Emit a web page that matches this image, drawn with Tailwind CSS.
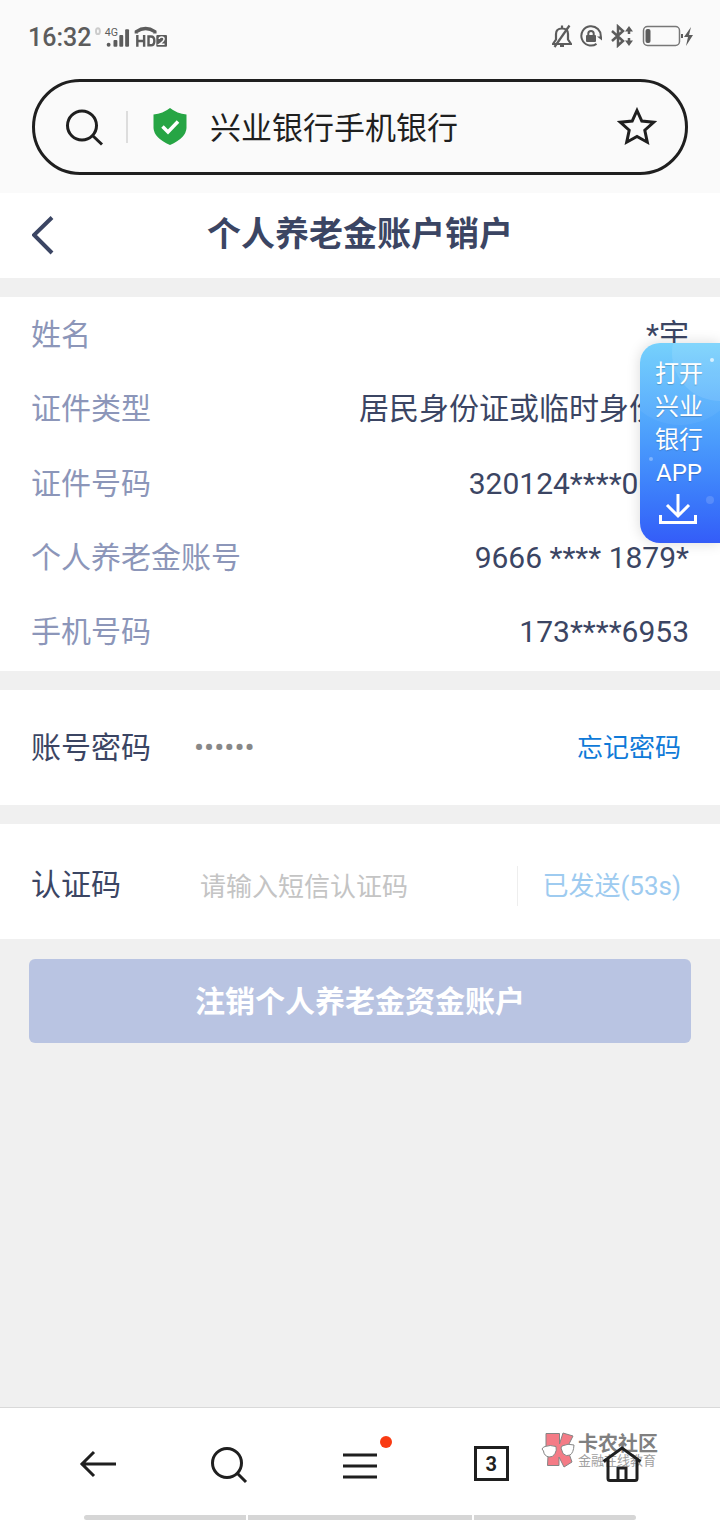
<!DOCTYPE html>
<html lang="zh-CN">
<head>
<meta charset="utf-8">
<meta name="viewport" content="width=device-width, initial-scale=1">
<title>个人养老金账户销户</title>
<script src="https://cdn.jsdelivr.net/npm/@tailwindcss/browser@4"></script>
</head>
<body class="bg-[#f0f0f0] font-['Roboto','Noto_Sans_CJK_SC',sans-serif] text-[#3b4563]">
<div class="relative flex min-h-screen flex-col">

  <header class="bg-[#fafafa] px-8 pb-[18px]">
    <!-- Status bar -->
    <div class="-mx-1 flex h-[79px] items-center justify-between pb-1 text-[#5c5c5c]">
      <div class="flex items-center">
        <span class="text-[25px] font-medium">16:32</span>
        <svg class="ml-1 h-6 w-[72px]" viewBox="0 0 74 24" fill="none">
          <ellipse cx="3" cy="5" rx="2" ry="3" stroke="#cccccc" stroke-width="2"/>
          <text x="10" y="10" font-size="11" fill="#5c5c5c">4G</text>
          <g fill="#5c5c5c"><circle cx="14" cy="19" r="2"/><rect x="19" y="14" width="4" height="7" rx="1"/><rect x="25" y="9" width="4" height="12" rx="1"/><rect x="31" y="3" width="4" height="18" rx="1"/></g>
          <path d="M42.500 7.500v-2q9.500-6.500 19 0v2" stroke="#5c5c5c" stroke-width="3.500"/>
          <path d="M43.500 9v12M50.500 9v12M43.500 15h7M55 10.500v9h2.500q3.500 0 3.500-4.500t-3.500-4.500z" stroke="#5c5c5c" stroke-width="2.500"/>
          <rect x="63" y="9" width="11" height="12" rx="1" fill="#5c5c5c"/>
          <path d="M66 13q0-2 2.500-2t2.500 2q0 2-5 5.500h5.500" stroke="#fafafa" stroke-width="1.500"/>
        </svg>
      </div>
      <div class="flex items-center pb-1">
        <svg class="mr-2 h-6 w-5" viewBox="0 0 20 24" fill="none" stroke="#5c5c5c" stroke-width="2.200"><path d="M1 20h18l-3-4.500V10q0-5.500-6-5.500T4 10v5.500zM10 4V1.500M8 22h4"/><path d="M17.500 1.500 2.500 23"/></svg>
        <svg class="mr-2 h-6 w-[22px]" viewBox="0 0 22 24" fill="none" stroke="#5c5c5c" stroke-width="2"><path d="M16.500 19.900A9.700 9.700 0 1 1 20.700 13"/><path d="M17 12.500h5v4z" fill="#5c5c5c" stroke="none"/><path d="M8.300 11V9.500q0-2.500 2.700-2.500t2.700 2.500V11"/><rect x="6" y="11" width="10" height="7" rx="1" fill="#5c5c5c" stroke="none"/></svg>
        <svg class="mr-2 h-6 w-6" viewBox="0 0 24 24" fill="none" stroke="#5c5c5c" stroke-width="2.500"><path d="M2 7l11 10-5 4.500v-19L13 7 2 17"/><path d="M19 5v5M19 14v5" stroke-width="2.500"/><path d="M15 7.500 19 2l4 5.500zM15 16.500l4 5.500 4-5.500z" fill="#5c5c5c" stroke="none"/></svg>
        <svg class="-mr-0.5 h-6 w-[52px]" viewBox="0 0 52 24"><rect x="1.500" y="2.500" width="36" height="19" rx="4" fill="none" stroke="#777777" stroke-width="1.500"/><rect x="3.500" y="5" width="5" height="14" rx="2" fill="#5c5c5c"/><rect x="39" y="10" width="2" height="4" fill="#5c5c5c"/><path d="M49 3l-7 10h4l-2 9 7-11h-4z" fill="#5c5c5c"/></svg>
      </div>
    </div>

    <!-- Address bar -->
    <div class="flex h-24 items-center rounded-full border-3 border-[#1f1f1f] px-[30px]">
      <button type="button" aria-label="搜索" class="shrink-0">
        <svg class="size-10" viewBox="0 0 40 40" fill="none" stroke="#1f1f1f" stroke-width="3"><circle cx="17" cy="18.500" r="14.500"/><path d="M27.500 28.500 37 37.500"/></svg>
      </button>
      <span class="mr-5 ml-[21px] h-8 w-0.5 bg-[#dddddd]"></span>
      <svg class="mx-1 h-10 w-[36px] shrink-0" viewBox="0 0 36 40"><path d="M18 1Q25 6.500 34.500 7.500V21Q34 31 18 38Q2 31 1.500 21V7.500Q11 6.500 18 1z" fill="#26a544"/><path d="M10.500 19.500l5.500 5.500 10-10.500" fill="none" stroke="#fff" stroke-width="3.500"/></svg>
      <label for="address" class="sr-only">地址栏</label>
      <input id="address" type="text" value="兴业银行手机银行" class="ml-[18px] min-w-0 flex-1 bg-transparent pt-1 text-[31px] text-[#1f1f1f] outline-none">
      <button type="button" aria-label="收藏" class="-mr-0.5 shrink-0">
        <svg class="size-10" viewBox="0 0 40 40" fill="none" stroke="#1f1f1f" stroke-width="3"><path d="M20 3.500l4.800 10.500 12 1.200-9 8 2.500 12L20 29.500l-10.300 5.700 2.500-12-9-8 12-1.200z"/></svg>
      </button>
    </div>
  </header>

  <main class="flex-1">
    <div class="flex h-[85px] items-center bg-white px-8">
      <button type="button" aria-label="返回" class="w-10"><svg class="h-10 w-6" viewBox="0 0 24 40" fill="none" stroke="#3b4563" stroke-width="4"><path d="M20 1.500 2 19l18 18"/></svg></button>
      <h1 class="flex-1 pb-0.5 text-center text-[34px] font-bold">个人养老金账户销户</h1>
      <span class="w-10"></span>
    </div>

    <dl class="mt-[19px] bg-white px-[31px] pb-[3px] text-[30px]">
      <div class="flex h-[74px] items-center justify-between"><dt class="text-[#8c96b9]">姓名</dt><dd>*宇</dd></div>
      <div class="flex h-[75px] items-center justify-between"><dt class="text-[#8c96b9]">证件类型</dt><dd>居民身份证或临时身份证</dd></div>
      <div class="flex h-[74px] items-center justify-between"><dt class="text-[#8c96b9]">证件号码</dt><dd>320124****0000</dd></div>
      <div class="flex h-[74px] items-center justify-between"><dt class="text-[#8c96b9]">个人养老金账号</dt><dd>9666 **** 1879*</dd></div>
      <div class="flex h-[74px] items-center justify-between"><dt class="text-[#8c96b9]">手机号码</dt><dd>173****6953</dd></div>
    </dl>

    <form>
      <div class="mt-[19px] flex h-[115px] items-center bg-white px-[31px]">
        <label for="pwd" class="w-[163px] text-[30px]">账号密码</label>
        <input id="pwd" type="password" value="000000" class="min-w-0 flex-1 text-[30px] text-[#888888] outline-none">
        <a href="#" class="mr-2 pt-0.5 text-[26px] text-[#0f7ad8]">忘记密码</a>
      </div>
      <div class="mt-[19px] flex h-[115px] items-center bg-white px-[31px] pt-2">
        <label for="code" class="w-[169px] pb-0.5 text-[30px]">认证码</label>
        <input id="code" type="text" placeholder="请输入短信认证码" class="min-w-0 flex-1 pt-1 text-[26px] outline-none placeholder:text-[#c4c4c4]">
        <button type="button" class="mr-2 h-10 border-l border-[#eeeeee] pl-6 text-[26px] leading-10 text-[#9ecbf0]">已发送(53s)</button>
      </div>
      <div class="px-[29px] pt-5">
        <button type="submit" class="h-[84px] w-full rounded-md bg-[#b9c4e2] text-[30px] font-bold text-white">注销个人养老金资金账户</button>
      </div>
    </form>
  </main>

  <!-- Floating prompt that opens the bank app -->
  <a href="#" class="absolute right-0 top-[343px] flex h-[200px] w-20 flex-col items-center overflow-hidden rounded-l-[20px] bg-linear-to-b from-[#6fcffc] via-[#4a9afc] to-[#345cf8] pt-[15px] text-center text-2xl leading-[33px] text-white shadow-[0_0_14px_rgba(0,0,0,0.15)]">
    <svg class="absolute inset-0 size-full" viewBox="0 0 80 200" fill="#fff"><circle cx="80" cy="10" r="48" opacity=".1"/><circle cx="40" cy="20" r="62" opacity=".05"/><circle cx="72" cy="17" r="2" opacity=".7"/><circle cx="11" cy="116" r="2" opacity=".3"/><circle cx="70" cy="157" r="4" opacity=".15"/></svg>
    <span class="relative mr-0.5 text-shadow-xs">打开<br>兴业<br>银行<br>APP</span>
    <svg class="relative mt-1 mr-1 h-8 w-10" viewBox="0 0 40 32" fill="none" stroke="#fff" stroke-width="3"><path d="M20 0v21M9 11l11 11 11-11M2.500 21v7.500h35V21"/></svg>
  </a>

  <!-- Browser toolbar -->
  <footer class="relative border-t border-[#d9d9d9] bg-white">
    <!-- Community watermark lying under the toolbar icons -->
    <div class="pointer-events-none absolute right-[62px] top-6 flex items-start gap-0.5 text-[#808080]">
      <svg class="h-9 w-[35px]" viewBox="0 0 35 36" stroke="#858585" stroke-width="1"><path d="M5 1.500h13.500V12L22 1l10 3-6 12 5 14-8 5-5-10v8.500H6.500L7 24 5 14z" fill="#f47b86"/><path d="M1 17q1-2 3-2.500 5-2 11 0 1 4-1 7-2 4-6 3.500Q3 24 2.500 19zM20 16l1-2q6-3 12-1-.500 8-4 10-4 2-7-1.500z" fill="#fff"/></svg>
      <div>
        <p class="text-xl leading-6 font-bold">卡农社区</p>
        <p class="text-[13px] leading-2.5 text-[#a0a0a0]">金融在线教育</p>
      </div>
    </div>

    <nav class="relative grid h-[107px] grid-cols-5 items-center justify-items-center px-8 pt-1">
      <button type="button" aria-label="后退"><svg class="size-10" viewBox="0 0 40 40" fill="none" stroke="#1f1f1f" stroke-width="3"><path d="M38 20H3M16 8 4 20l12 12"/></svg></button>
      <button type="button" aria-label="搜索"><svg class="size-10" viewBox="0 0 40 40" fill="none" stroke="#1f1f1f" stroke-width="3"><circle cx="18" cy="19" r="14.500"/><path d="M28.500 29.500 37 38"/></svg></button>
      <button type="button" aria-label="菜单" class="relative"><svg class="size-10" viewBox="0 0 40 40" fill="none" stroke="#1f1f1f" stroke-width="3"><path d="M3 11h34M3 22h34M3 33h34"/></svg><span class="absolute -right-3 -top-2 size-3 rounded-full bg-[#f93a12]"></span></button>
      <button type="button" aria-label="标签页" class="size-[35px] border-3 border-[#1f1f1f] text-xl leading-[30px] font-bold text-[#1f1f1f]">3</button>
      <button type="button" aria-label="主页"><svg class="size-10" viewBox="0 0 40 40" fill="none" stroke="#1f1f1f" stroke-width="3"><path d="M1.500 17.500 20 4l18.500 13.500M6 15v19.500q0 2 2 2h25q2 0 2-2V15"/><path d="M16 36V24h8v12"/></svg></button>
    </nav>
    <div class="mx-auto flex h-[5px] w-[552px] max-w-full gap-0.5 overflow-hidden rounded-full">
      <span class="flex-[162] bg-[#d6d6d6]"></span><span class="flex-[224] bg-[#d6d6d6]"></span><span class="flex-[162] bg-[#d6d6d6]"></span>
    </div>
  </footer>
</div>
</body>
</html>
